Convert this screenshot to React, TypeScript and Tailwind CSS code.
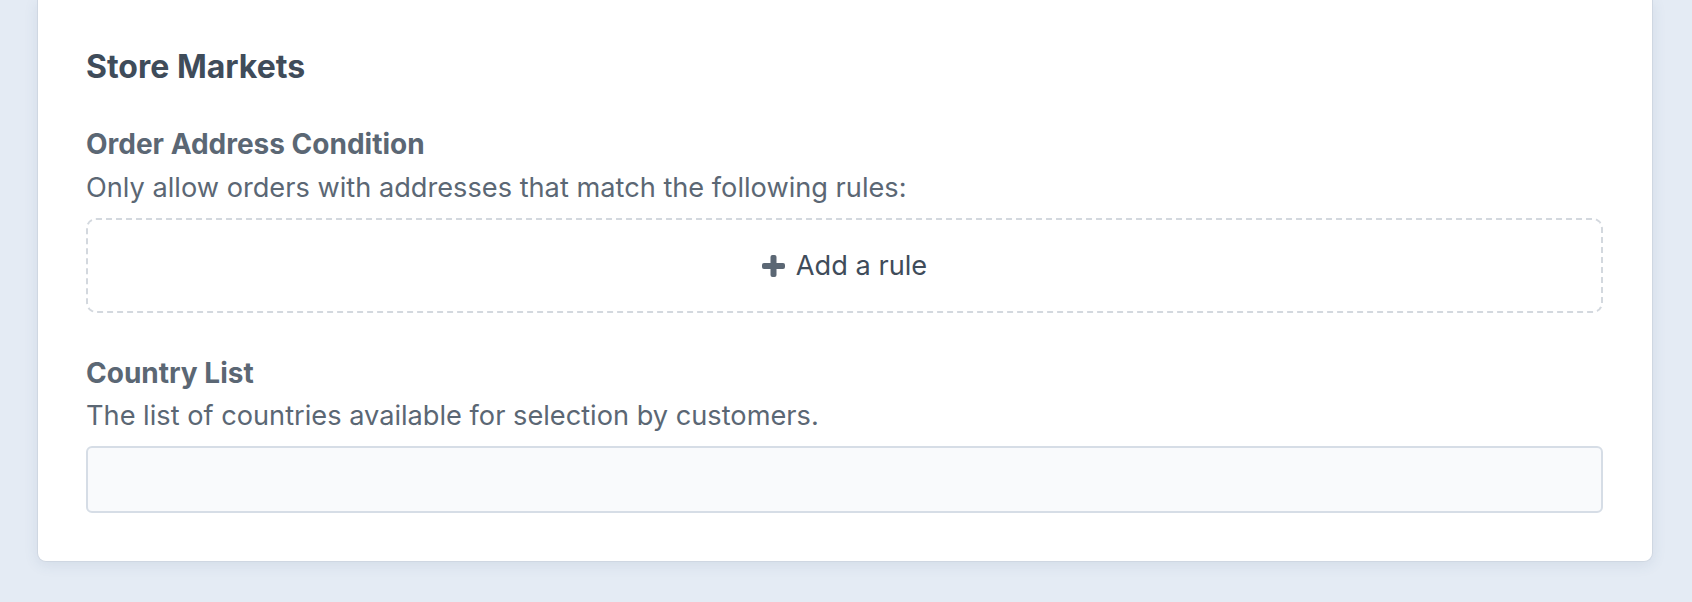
import React from "react";

function PlusIcon() {
  return (
    <svg width="23" height="22" viewBox="0 0 23 22" aria-hidden="true">
      <rect x="8.5" y="0" width="6" height="22" rx="2" fill="#5b6774" />
      <rect x="0" y="8" width="23" height="6" rx="2" fill="#5b6774" />
    </svg>
  );
}

export default function App() {
  return (
    <div
      className="min-h-[602px] w-full bg-[#e4ebf4] pl-[37px] pr-[39px] pb-[40px]"
      style={{ fontFamily: "Inter, 'Noto Sans', sans-serif" }}
    >
      <div className="rounded-b-[9px] border-x border-b border-[#cfd7e2] bg-white pl-[48px] pr-[49px] pt-[48px] pb-[48px] shadow-[0_3px_14px_rgba(60,90,130,0.10)]">
        <h2 className="text-[32px] font-bold leading-[38px] text-[#3f4c5a]">
          Store Markets
        </h2>

        <div className="mt-[41px]">
          <div className="text-[28px] font-bold leading-[34px] text-[#5b6774]">
            Order Address Condition
          </div>
          <p className="mt-[10px] text-[27.2px] leading-[34px] text-[#5b6774]">
            Only allow orders with addresses that match the following rules:
          </p>
          <button
            type="button"
            className="mt-[13px] flex h-[95px] w-full items-center justify-center gap-[11px] rounded-[10px] border-2 border-dashed border-[#d3d8de] bg-white"
          >
            <PlusIcon />
            <span className="text-[27.2px] leading-[34px] text-[#3f4c5a]">
              Add a rule
            </span>
          </button>
        </div>

        <div className="mt-[43px]">
          <div className="text-[28px] font-bold leading-[34px] text-[#5b6774]">
            Country List
          </div>
          <p className="mt-[9px] text-[27.2px] leading-[34px] text-[#5b6774]">
            The list of countries available for selection by customers.
          </p>
          <div className="mt-[13px] h-[67px] w-full rounded-[6px] border-2 border-[#d6dde6] bg-[#f9fafc]" />
        </div>
      </div>
    </div>
  );
}
